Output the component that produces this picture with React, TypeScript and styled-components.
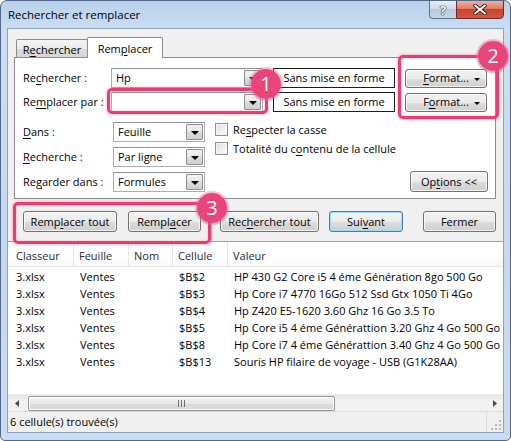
import React from 'react';
import styled, { createGlobalStyle } from 'styled-components';

const GlobalStyle = createGlobalStyle`
  html, body {
    margin: 0;
    padding: 0;
    background: #ffffff;
  }
  body {
    font-family: "Open Sans", "Noto Sans", sans-serif;
    font-size: 11px;
    color: #000000;
  }
  * {
    box-sizing: border-box;
  }
`;

const Window = styled.div`
  position: relative;
  width: 511px;
  height: 441px;
  display: flex;
  flex-direction: column;
  border: 1px solid #52698a;
  border-radius: 7px 7px 5px 5px;
  background: linear-gradient(180deg, #b9d1ec 0%, #cbdef3 7%, #c4d8ee 60%, #cadcef 100%);
  padding: 0 6px 7px 6px;
  overflow: hidden;
`;

const TitleBar = styled.div`
  height: 27px;
  display: flex;
  justify-content: space-between;
  align-items: flex-start;
`;

const Title = styled.div`
  padding: 6px 0 0 1px;
  line-height: 16px;
  font-size: 11.5px;
  color: #000;
`;

const TitleControls = styled.div`
  display: flex;
  margin-top: -1px;
`;

const HelpButton = styled.div`
  width: 27px;
  height: 19px;
  border: 1px solid #5f7690;
  border-right: none;
  border-radius: 0 0 0 4px;
  background: linear-gradient(180deg, #e5edf6 0%, #cfdbe9 45%, #b8c9dc 50%, #c6d5e6 100%);
  display: flex;
  align-items: center;
  justify-content: center;
  font-weight: bold;
  font-size: 13px;
  color: #f4f4f4;
  text-shadow: 0 0 1px #333, 0 0 1px #333, 0 0 1px #333;
`;

const CloseButton = styled.div`
  width: 48px;
  height: 19px;
  border: 1px solid #6e2a22;
  border-radius: 0 0 4px 0;
  background: linear-gradient(180deg, #eab0a3 0%, #dd7e6a 45%, #c8442b 50%, #d3583e 100%);
  display: flex;
  align-items: center;
  justify-content: center;
`;

const Client = styled.div`
  flex: 1;
  display: flex;
  flex-direction: column;
  border: 1px solid #8ba3bf;
  background: #f0f0f0;
`;

const TabArea = styled.div`
  padding: 8px 7px 0 6px;
`;

const TabStrip = styled.div`
  display: flex;
  align-items: flex-end;
  height: 20px;
  padding-left: 2px;
`;

const Tab = styled.div<{ $active?: boolean; $w: number }>`
  position: relative;
  width: ${p => p.$w}px;
  height: ${p => (p.$active ? 21 : 18)}px;
  margin-bottom: ${p => (p.$active ? -1 : 0)}px;
  margin-left: ${p => (p.$active ? -1 : 0)}px;
  z-index: ${p => (p.$active ? 1 : 0)};
  border: 1px solid #898c95;
  border-bottom: none;
  border-radius: 2px 2px 0 0;
  background: ${p =>
    p.$active ? '#ffffff' : 'linear-gradient(180deg, #f3f3f3 0%, #ebebeb 50%, #dddddd 51%, #d6d6d6 100%)'};
  display: flex;
  align-items: center;
  justify-content: center;
  padding-top: ${p => (p.$active ? 0 : 1)}px;
`;

const Panel = styled.div`
  border: 1px solid #898c95;
  background: #ffffff;
  padding: 10px 7px 6px 8px;
`;

const TopGrid = styled.div`
  display: grid;
  grid-template-columns: 78px 152px 122px 82px;
  column-gap: 10px;
  row-gap: 4px;
  align-items: center;
`;

const FieldLabel = styled.div`
  line-height: 20px;
  white-space: nowrap;
`;

const Key = styled.span`
  text-decoration: underline;
  text-underline-offset: 2px;
  text-decoration-thickness: 1px;
`;

const Combo = styled.div<{ $w: number }>`
  width: ${p => p.$w}px;
  height: 20px;
  border: 1px solid #abadb3;
  border-top-color: #8e9095;
  background: #ffffff;
  display: flex;
  align-items: center;
  padding: 1px;
`;

const ComboText = styled.div`
  flex: 1;
  padding-left: 3px;
  line-height: 16px;
`;

const DropButton = styled.div`
  width: 17px;
  height: 100%;
  border: 1px solid #8d8d8d;
  border-radius: 1px;
  background: linear-gradient(180deg, #f2f2f2 0%, #e6e6e6 50%, #d9d9d9 51%, #d0d0d0 100%);
  display: flex;
  align-items: center;
  justify-content: center;
`;

const Arrow = styled.span`
  width: 0;
  height: 0;
  border-left: 4px solid transparent;
  border-right: 4px solid transparent;
  border-top: 4px solid #000;
  margin-top: 1px;
`;

const FormatBox = styled.div`
  height: 20px;
  border: 1px solid #1c1c1c;
  background: #ffffff;
  display: flex;
  align-items: center;
  justify-content: center;
  line-height: 16px;
`;

const Button = styled.div<{ $w?: number; $h?: number; $ml?: number; $default?: boolean }>`
  width: ${p => (p.$w ? `${p.$w}px` : 'auto')};
  height: ${p => p.$h ?? 21}px;
  margin-left: ${p => p.$ml ?? 0}px;
  border: 1px solid ${p => (p.$default ? '#3c7fb1' : '#707070')};
  border-radius: 3px;
  background: linear-gradient(180deg, #f2f2f2 0%, #ebebeb 50%, #dddddd 51%, #cfcfcf 100%);
  box-shadow: inset 0 0 0 1px ${p => (p.$default ? '#9edcf7' : 'rgba(255, 255, 255, 0.75)')};
  display: flex;
  align-items: center;
  justify-content: center;
  line-height: 16px;
  white-space: nowrap;
  position: relative;
`;

const MenuArrow = styled.span`
  position: absolute;
  right: 6px;
  top: 8px;
  width: 0;
  height: 0;
  border-left: 3px solid transparent;
  border-right: 3px solid transparent;
  border-top: 3px solid #000;
`;

const LowerSection = styled.div`
  display: flex;
  margin-top: 10px;
`;

const LowerGrid = styled.div`
  display: grid;
  grid-template-columns: 90px 92px;
  row-gap: 5px;
  align-items: center;
`;

const OptionsColumn = styled.div`
  flex: 1;
  margin-left: 10px;
  margin-top: -2px;
  display: flex;
  flex-direction: column;
`;

const CheckRow = styled.label`
  display: flex;
  align-items: center;
  height: 19px;
  gap: 5px;
`;

const CheckBox = styled.span`
  width: 13px;
  height: 13px;
  border: 1px solid #8e8f8f;
  background: linear-gradient(135deg, #dcdcdc 0%, #f2f2f2 60%, #fdfdfd 100%);
  box-shadow: inset 0 0 0 1px #f4f4f4;
`;

const OptionsButton = styled(Button)`
  align-self: flex-end;
  margin-top: auto;
`;

const ButtonRow = styled.div`
  display: flex;
  padding: 12px 0 0 15px;
  margin-bottom: 9px;
`;

const ListView = styled.div`
  flex: 1;
  display: flex;
  flex-direction: column;
  border-top: 1px solid #9aa1aa;
  background: #ffffff;
`;

const columns = '66px 55px 44px 55px 1fr';

const HeaderRow = styled.div`
  display: grid;
  grid-template-columns: ${columns};
  height: 25px;
  border-bottom: 1px solid #e5e5e5;
  background: linear-gradient(180deg, #ffffff 0%, #ffffff 60%, #f7f8fa 100%);
`;

const HeaderCell = styled.div<{ $first?: boolean; $last?: boolean }>`
  padding-left: ${p => (p.$first ? 8 : 5)}px;
  padding-top: 3px;
  border-right: ${p => (p.$last ? 'none' : '1px solid #e5e5e5')};
  line-height: 21px;
  color: #1e2b3a;
  white-space: nowrap;
  overflow: hidden;
`;

const Rows = styled.div`
  flex: 1;
  padding-top: 1px;
  overflow: hidden;
`;

const Row = styled.div`
  display: grid;
  grid-template-columns: ${columns};
  height: 17px;
`;

const Cell = styled.div<{ $first?: boolean }>`
  padding-left: ${p => (p.$first ? 8 : 6)}px;
  line-height: 17px;
  white-space: nowrap;
  overflow: hidden;
`;

const HScroll = styled.div`
  height: 17px;
  display: flex;
  align-items: center;
  background: linear-gradient(180deg, #e7e7e7 0%, #f2f2f2 40%, #f0f0f0 100%);
  border-top: 1px solid #ececec;
`;

const ScrollArrow = styled.div`
  width: 17px;
  height: 16px;
  display: flex;
  align-items: center;
  justify-content: center;
`;

const ScrollThumb = styled.div`
  width: 307px;
  height: 15px;
  margin-left: 3px;
  border: 1px solid #979797;
  border-radius: 2px;
  background: linear-gradient(180deg, #f3f3f3 0%, #e8e8e8 50%, #dcdcdc 51%, #d8d8d8 100%);
  box-shadow: inset 0 0 0 1px rgba(255, 255, 255, 0.8);
  display: flex;
  align-items: center;
  justify-content: center;
`;

const ScrollTrack = styled.div`
  flex: 1;
`;

const StatusBar = styled.div`
  height: 21px;
  display: flex;
  align-items: center;
  border-top: 1px solid #d9d9d9;
  background: #f0f0f0;
`;

const StatusText = styled.div`
  flex: 1;
  padding-left: 2px;
  line-height: 16px;
`;

const Grip = styled.div`
  width: 17px;
  height: 100%;
  border-left: 1px solid #dadada;
  display: flex;
  align-items: flex-end;
  justify-content: flex-end;
  padding: 0 2px 2px 0;
`;

const HighlightBox = styled.div<{ $x: number; $y: number; $w: number; $h: number }>`
  position: absolute;
  left: ${p => p.$x}px;
  top: ${p => p.$y}px;
  width: ${p => p.$w}px;
  height: ${p => p.$h}px;
  border: 3px solid #ee3a6d;
  border-radius: 5px;
  box-shadow: 0 0 3px rgba(238, 58, 109, 0.55), inset 0 0 2px rgba(238, 58, 109, 0.4);
  pointer-events: none;
`;

const Badge = styled.div<{ $x: number; $y: number }>`
  position: absolute;
  left: ${p => p.$x - 15}px;
  top: ${p => p.$y - 15}px;
  width: 30px;
  height: 30px;
  border-radius: 50%;
  background: radial-gradient(circle, #e8457a 0%, #e8457a 78%, #f07fa3 100%);
  box-shadow: 0 0 0 2px rgba(243, 120, 160, 0.45), 0 1px 3px rgba(0, 0, 0, 0.25);
  color: #ffffff;
  font-size: 20px;
  line-height: 30px;
  text-align: center;
  pointer-events: none;
`;

interface Result {
  book: string;
  sheet: string;
  name: string;
  cell: string;
  value: string;
}

const results: Result[] = [
  { book: '3.xlsx', sheet: 'Ventes', name: '', cell: '$B$2', value: 'HP 430 G2 Core i5 4 éme Génération 8go 500 Go' },
  { book: '3.xlsx', sheet: 'Ventes', name: '', cell: '$B$3', value: 'Hp Core i7 4770 16Go 512 Ssd Gtx 1050 Ti 4Go' },
  { book: '3.xlsx', sheet: 'Ventes', name: '', cell: '$B$4', value: 'Hp Z420 E5-1620 3.60 Ghz 16 Go 3.5 To' },
  { book: '3.xlsx', sheet: 'Ventes', name: '', cell: '$B$5', value: 'Hp Core i5 4 éme Générattion 3.20 Ghz 4 Go 500 Go' },
  { book: '3.xlsx', sheet: 'Ventes', name: '', cell: '$B$8', value: 'Hp Core i7 4 éme Générattion 3.40 Ghz 4 Go 500 Go' },
  { book: '3.xlsx', sheet: 'Ventes', name: '', cell: '$B$13', value: 'Souris HP filaire de voyage - USB (G1K28AA)' },
];

// underline the access key letter at index i
const withKey = (text: string, i: number) => (
  <>
    {text.slice(0, i)}
    <Key>{text[i]}</Key>
    {text.slice(i + 1)}
  </>
);

const ComboBox: React.FC<{ w: number; value?: string }> = ({ w, value }) => (
  <Combo $w={w}>
    <ComboText>{value}</ComboText>
    <DropButton>
      <Arrow />
    </DropButton>
  </Combo>
);

const App: React.FC = () => {
  return (
    <>
      <GlobalStyle />
      <Window>
        <TitleBar>
          <Title>Rechercher et remplacer</Title>
          <TitleControls>
            <HelpButton>?</HelpButton>
            <CloseButton>
              <svg width="14" height="11" viewBox="0 0 14 11">
                <path d="M2 1.5 L12 9.5 M12 1.5 L2 9.5" stroke="#4a1f18" strokeWidth="3.6" strokeLinecap="round" />
                <path d="M2 1.5 L12 9.5 M12 1.5 L2 9.5" stroke="#ffffff" strokeWidth="2" strokeLinecap="round" />
              </svg>
            </CloseButton>
          </TitleControls>
        </TitleBar>

        <Client>
          <TabArea>
            <TabStrip>
              <Tab $w={72}>{withKey('Rechercher', 1)}</Tab>
              <Tab $w={76} $active>{withKey('Remplacer', 3)}</Tab>
            </TabStrip>
            <Panel>
              <TopGrid>
                <FieldLabel>{withKey('Rechercher :', 2)}</FieldLabel>
                <ComboBox w={152} value="Hp" />
                <FormatBox>Sans mise en forme</FormatBox>
                <Button $h={19}>
                  {withKey('Format...', 0)}
                  <MenuArrow />
                </Button>

                <FieldLabel>{withKey('Remplacer par :', 2)}</FieldLabel>
                <ComboBox w={152} />
                <FormatBox>Sans mise en forme</FormatBox>
                <Button $h={19}>
                  {withKey('Format...', 1)}
                  <MenuArrow />
                </Button>
              </TopGrid>

              <LowerSection>
                <LowerGrid>
                  <FieldLabel>{withKey('Dans :', 0)}</FieldLabel>
                  <ComboBox w={92} value="Feuille" />
                  <FieldLabel>{withKey('Recherche :', 0)}</FieldLabel>
                  <ComboBox w={92} value="Par ligne" />
                  <FieldLabel>{withKey('Regarder dans :', 2)}</FieldLabel>
                  <ComboBox w={92} value="Formules" />
                </LowerGrid>
                <OptionsColumn>
                  <CheckRow>
                    <CheckBox />
                    <span>{withKey('Respecter la casse', 2)}</span>
                  </CheckRow>
                  <CheckRow>
                    <CheckBox />
                    <span>{withKey('Totalité du contenu de la cellule', 13)}</span>
                  </CheckRow>
                  <OptionsButton $w={78}>{withKey('Options <<', 2)}</OptionsButton>
                </OptionsColumn>
              </LowerSection>
            </Panel>
          </TabArea>

          <ButtonRow>
            <Button $w={94}>{withKey('Remplacer tout', 4)}</Button>
            <Button $w={73} $ml={11}>{withKey('Remplacer', 5)}</Button>
            <Button $w={99} $ml={19}>{withKey('Rechercher tout', 3)}</Button>
            <Button $w={74} $ml={10} $default>{withKey('Suivant', 3)}</Button>
            <Button $w={73} $ml={20}>Fermer</Button>
          </ButtonRow>

          <ListView>
            <HeaderRow>
              <HeaderCell $first>Classeur</HeaderCell>
              <HeaderCell>Feuille</HeaderCell>
              <HeaderCell>Nom</HeaderCell>
              <HeaderCell>Cellule</HeaderCell>
              <HeaderCell $last>Valeur</HeaderCell>
            </HeaderRow>
            <Rows>
              {results.map(r => (
                <Row key={r.cell}>
                  <Cell $first>{r.book}</Cell>
                  <Cell>{r.sheet}</Cell>
                  <Cell>{r.name}</Cell>
                  <Cell>{r.cell}</Cell>
                  <Cell>{r.value}</Cell>
                </Row>
              ))}
            </Rows>
            <HScroll>
              <ScrollArrow>
                <svg width="4" height="7" viewBox="0 0 4 7">
                  <path d="M4 0 L0 3.5 L4 7 Z" fill="#4d4d4d" />
                </svg>
              </ScrollArrow>
              <ScrollThumb>
                <svg width="7" height="7" viewBox="0 0 7 7">
                  <path d="M0.5 0 V7 M3.5 0 V7 M6.5 0 V7" stroke="#6f6f6f" strokeWidth="1" />
                </svg>
              </ScrollThumb>
              <ScrollTrack />
              <ScrollArrow>
                <svg width="4" height="7" viewBox="0 0 4 7">
                  <path d="M0 0 L4 3.5 L0 7 Z" fill="#4d4d4d" />
                </svg>
              </ScrollArrow>
            </HScroll>
          </ListView>

          <StatusBar>
            <StatusText>6 cellule(s) trouvée(s)</StatusText>
            <Grip>
              <svg width="11" height="11" viewBox="0 0 11 11">
                {[
                  [9, 1], [9, 5], [9, 9], [5, 5], [5, 9], [1, 9],
                ].map(([x, y]) => (
                  <rect key={`${x}-${y}`} x={x} y={y} width="2" height="2" fill="#b8b8b8" />
                ))}
              </svg>
            </Grip>
          </StatusBar>
        </Client>

        <HighlightBox $x={106} $y={87} $w={161} $h={26} />
        <HighlightBox $x={397} $y={54} $w={101} $h={64} />
        <HighlightBox $x={12} $y={201} $w={198} $h={42} />
        <Badge $x={265} $y={83}>1</Badge>
        <Badge $x={492} $y={55}>2</Badge>
        <Badge $x={211} $y={207}>3</Badge>
      </Window>
    </>
  );
};

export default App;
